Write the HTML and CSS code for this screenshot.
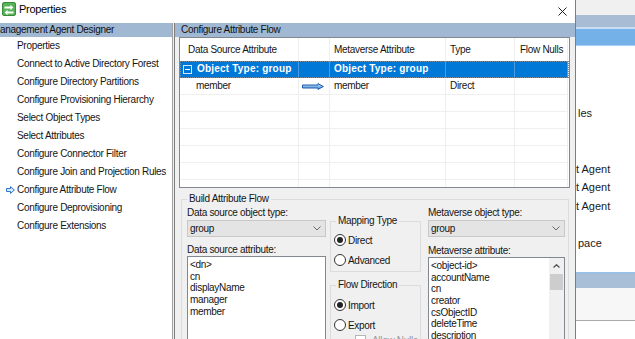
FILE: index.html
```html
<!DOCTYPE html>
<html>
<head>
<meta charset="utf-8">
<title>Properties</title>
<link rel="stylesheet" href="styles.css">
</head>
<body>
<div class="screen">
  <div class="dialog">
    <div class="titlebar">
      <svg class="app-icon" viewBox="0 0 14 14" width="14" height="14"><rect x="0.5" y="0.5" width="13" height="13" rx="1.5" fill="#58b25a" stroke="#3a8a3c"/><path d="M2.5 4.5h6V2.8l2.8 2.7-2.8 2.7V6.5h-6z" fill="#fff"/><path d="M11.5 9.5h-6V7.8L2.7 10.5l2.8 2.7v-1.7h6z" fill="#fff"/></svg>
      <span class="title">Properties</span>
      <svg class="close" viewBox="0 0 9 9" width="9" height="9"><path d="M0.5 0.5 8.5 8.5M8.5 0.5 0.5 8.5" stroke="#222" stroke-width="1" fill="none"/></svg>
    </div>
    <div class="main">
      <div class="left">
        <div class="pane-header left-header">Management Agent Designer</div>
        <ul class="nav">
          <li>Properties</li>
          <li>Connect to Active Directory Forest</li>
          <li>Configure Directory Partitions</li>
          <li>Configure Provisioning Hierarchy</li>
          <li>Select Object Types</li>
          <li>Select Attributes</li>
          <li>Configure Connector Filter</li>
          <li>Configure Join and Projection Rules</li>
          <li class="current"><svg class="cur-arrow" viewBox="0 0 9 8" width="9" height="8"><path d="M0.5 2.5H4.5V0.6L8.4 4 4.5 7.4V5.5H0.5Z" fill="#d6e9fc" stroke="#2f74d0" stroke-width="1"/></svg>Configure Attribute Flow</li>
          <li>Configure Deprovisioning</li>
          <li>Configure Extensions</li>
        </ul>
      </div>
      <div class="splitter"></div>
      <div class="right">
        <div class="pane-header right-header">Configure Attribute Flow</div>
        <div class="grid">
          <div class="gr head">
            <div class="c1">Data Source Attribute</div>
            <div class="c2"></div>
            <div class="c3">Metaverse Attribute</div>
            <div class="c4">Type</div>
            <div class="c5">Flow Nulls</div>
          </div>
          <div class="gr sel">
            <div class="c1 grp"><span class="minus"></span><span class="grp-text">Object Type: group</span></div>
            <div class="c2"></div>
            <div class="c3">Object Type: group</div>
            <div class="c4"></div>
            <div class="c5"></div>
          </div>
          <div class="gr">
            <div class="c1 indent">member</div>
            <div class="c2 arrow-cell"><svg viewBox="0 0 22 7" width="22" height="7"><defs><linearGradient id="ag" x1="0" y1="0" x2="0" y2="1"><stop offset="0" stop-color="#bcdcf7"/><stop offset="1" stop-color="#4b8fd6"/></linearGradient></defs><path d="M0.5 2H16V0.6L21.4 3.5 16 6.4V5H0.5Z" fill="url(#ag)" stroke="#1f5ea8" stroke-width="1"/></svg></div>
            <div class="c3">member</div>
            <div class="c4">Direct</div>
            <div class="c5"></div>
          </div>
          <div class="gr"><div></div><div></div><div></div><div></div><div></div></div>
          <div class="gr"><div></div><div></div><div></div><div></div><div></div></div>
          <div class="gr"><div></div><div></div><div></div><div></div><div></div></div>
          <div class="gr"><div></div><div></div><div></div><div></div><div></div></div>
          <div class="gr"><div></div><div></div><div></div><div></div><div></div></div>
          <div class="gr"><div></div><div></div><div></div><div></div><div></div></div>
        </div>
        <fieldset class="build">
          <legend>Build Attribute Flow</legend>
          <div class="cols">
            <div class="col col-a">
              <div class="lbl first">Data source object type:</div>
              <div class="combo"><span>group</span><svg class="chev" viewBox="0 0 8 5" width="8" height="5"><path d="M0.5 0.5 4 4 7.5 0.5" fill="none" stroke="#6a6a6a"/></svg></div>
              <div class="lbl second">Data source attribute:</div>
              <div class="listbox">
                <div class="items">
                  <div>&lt;dn&gt;</div>
                  <div>cn</div>
                  <div>displayName</div>
                  <div>manager</div>
                  <div>member</div>
                </div>
              </div>
            </div>
            <div class="col col-b">
              <fieldset class="gb gb-map">
                <legend>Mapping Type</legend>
                <div class="opt"><span class="radio on"></span>Direct</div>
                <div class="opt"><span class="radio"></span>Advanced</div>
              </fieldset>
              <fieldset class="gb gb-flow">
                <legend>Flow Direction</legend>
                <div class="opt"><span class="radio on"></span>Import</div>
                <div class="opt"><span class="radio"></span>Export</div>
                <div class="chk-row"><span class="chk"></span><span class="dis">Allow Nulls</span></div>
              </fieldset>
            </div>
            <div class="col col-c">
              <div class="lbl first">Metaverse object type:</div>
              <div class="combo"><span>group</span><svg class="chev" viewBox="0 0 8 5" width="8" height="5"><path d="M0.5 0.5 4 4 7.5 0.5" fill="none" stroke="#6a6a6a"/></svg></div>
              <div class="lbl second">Metaverse attribute:</div>
              <div class="listbox">
                <div class="items">
                  <div>&lt;object-id&gt;</div>
                  <div>accountName</div>
                  <div>cn</div>
                  <div>creator</div>
                  <div>csObjectID</div>
                  <div>deleteTime</div>
                  <div>description</div>
                  <div>displayName</div>
                </div>
                <div class="scrollbar">
                  <div class="sb-up"><svg viewBox="0 0 7 4" width="7" height="4"><path d="M0.5 3.5 3.5 0.7 6.5 3.5" fill="none" stroke="#505050" stroke-width="1.2"/></svg></div>
                  <div class="sb-thumb"></div>
                </div>
              </div>
            </div>
          </div>
        </fieldset>
      </div>
    </div>
  </div>
  <div class="bgwin">
    <div class="bw-top"></div>
    <div class="bw-band"></div>
    <div class="bw-hl"></div>
    <div class="bw-blue"></div>
    <div class="bw-hl2"></div>
    <div class="bw-body">
      <div class="bw-line ind">les</div>
      <div class="bw-line">&nbsp;</div>
      <div class="bw-line">&nbsp;</div>
      <div class="bw-line">t Agent</div>
      <div class="bw-line">t Agent</div>
      <div class="bw-line">t Agent</div>
      <div class="bw-line">&nbsp;</div>
      <div class="bw-line ind">pace</div>
    </div>
    <div class="bw-hl3"></div>
    <div class="bw-band2"></div>
    <div class="bw-pane"></div>
    <div class="bw-sep"></div>
    <div class="bw-rest"></div>
  </div>
</div>
</body>
</html>
```

FILE: styles.css
```css
* { box-sizing: border-box; }
html, body { margin: 0; padding: 0; }
body {
  width: 635px; height: 339px; overflow: hidden;
  font-family: "Liberation Sans", Arial, sans-serif;
  font-size: 10px; letter-spacing: -0.3px; color: #151515;
  background: #fff;
}
.screen { display: flex; width: 635px; height: 339px; overflow: hidden; }

/* dialog */
.dialog {
  width: 576px; flex: none; display: flex; flex-direction: column;
  background: #f0f0f0; border-right: 1px solid #7d7d7d; overflow: hidden;
}
.titlebar {
  height: 23px; flex: none; background: #fff;
  display: flex; align-items: flex-start; padding: 2px 0 0 2px;
}
.app-icon { flex: none; display: block; }
.title { font-size: 11px; line-height: 13px; margin: 1px 0 0 3px; color: #000; }
.close { margin: 5px 8px 0 auto; display: block; }

.main { flex: 1; display: flex; min-height: 0; }
.left {
  width: 173px; flex: none; background: #fff; border-right: 1px solid #a0a0a0;
  display: flex; flex-direction: column; overflow: hidden;
}
.pane-header {
  height: 14px; flex: none; background: #a0b8d2; line-height: 14px;
  white-space: nowrap; overflow: hidden; color: #111;
}
.left-header { text-indent: -8px; }
.nav { list-style: none; margin: 0; padding: 0; }
.nav li {
  height: 18px; line-height: 18px; padding-left: 17px; white-space: nowrap;
  display: flex; align-items: center;
}
.cur-arrow { margin-left: -11px; margin-right: 2px; display: block; flex: none; }
.splitter { width: 1px; flex: none; background: #f0f0f0; }
.right {
  flex: 1; min-width: 0; border-left: 1px solid #7d7d7d;
  display: flex; flex-direction: column; overflow: hidden;
}
.right-header { padding-left: 6px; }

/* list view */
.grid {
  margin-left: 4px; width: 391px; height: 151px; flex: none;
  background: #fff; border: 1px solid #828790; overflow: hidden;
}
.gr {
  display: grid; grid-template-columns: 119px 31px 116px 69px 53px;
  height: 17px;
}
.gr > div {
  border-right: 1px solid #efefef; border-bottom: 1px solid #efefef;
  line-height: 16px; white-space: nowrap; overflow: hidden; padding-left: 4px;
}
.gr .c1 { padding-left: 8px; }
.gr .c5 { padding-left: 5px; }
.gr.head { height: 23px; }
.gr.head > div { border-bottom: none; line-height: 23px; }
.gr.sel { outline: 1px dotted #7a8a99; outline-offset: -1px; }
.gr.sel > div {
  background: #0078d7; color: #fff; font-weight: bold; letter-spacing: 0.2px;
  border-right-color: #4c9be0; border-bottom-color: #0078d7;
}
.gr .grp { padding-left: 3px; display: flex; align-items: center; }
.minus {
  width: 9px; height: 9px; flex: none; border: 1px solid #d4e6f8;
  display: flex; align-items: center; justify-content: center;
}
.minus::before { content: ""; width: 5px; height: 1px; background: #fff; }
.grp-text { margin-left: 5px; }
.gr .indent { padding-left: 16px; }
.gr .arrow-cell { padding-left: 3px; display: flex; align-items: center; }
.arrow-cell svg { display: block; }

/* build attribute flow */
.build {
  margin: 5px 0 0 6px; width: 388px; height: 200px; flex: none; min-width: 0;
  border: 1px solid #dcdcdc; padding: 0 3px 0 5px;
}
.build > legend, .gb > legend { padding: 0 2px; line-height: 12px; }
.cols { display: flex; align-items: flex-start; }
.col-a { width: 139px; flex: none; }
.col-b { width: 91px; flex: none; margin-left: 4px; }
.col-c { width: 137px; flex: none; margin-left: 7px; }
.lbl { line-height: 12px; height: 12px; white-space: nowrap; }
.lbl.first { margin-top: 2px; }
.lbl.second { margin-top: 7px; }
.combo {
  margin-top: 1px; height: 17px; border: 1px solid #c8c8c8; background: #e4e4e4;
  display: flex; align-items: center; padding-left: 2px;
}
.chev { margin-left: auto; margin-right: 4px; display: block; }
.listbox {
  height: 120px; border: 1px solid #828790; background: #fff; display: flex;
}
.items { flex: 1; padding: 2px 0 0 2px; white-space: nowrap; overflow: hidden; }
.items div { line-height: 11.67px; height: 11.67px; }
.col-c .lbl.second { margin-top: 8px; }
.scrollbar { width: 15px; flex: none; background: #f0f0f0; display: flex; flex-direction: column; }
.sb-up { height: 16px; display: flex; align-items: center; justify-content: center; }
.sb-up svg { display: block; }
.sb-thumb { height: 16px; margin: 0 1px; background: #cdcdcd; }

.gb { margin: 0; border: 1px solid #dcdcdc; padding: 3px 0 0 3px; min-width: 0; }
.gb > legend { margin-left: 2px; }
.gb-map { margin-top: 10px; height: 57px; }
.gb-flow { margin-top: 7px; height: 80px; padding-top: 4px; }
.opt { height: 20px; display: flex; align-items: center; white-space: nowrap; }
.radio {
  width: 12px; height: 12px; flex: none; border: 1px solid #333; border-radius: 50%;
  background: #fff; margin-right: 2px;
  display: flex; align-items: center; justify-content: center;
}
.radio.on::before { content: ""; width: 6px; height: 6px; border-radius: 50%; background: #222; }
.chk-row { display: flex; align-items: flex-start; padding-left: 21px; height: 14px; }
.chk { width: 11px; height: 11px; border: 1px solid #b5b5b5; background: #fff; flex: none; }
.dis { color: #9a9a9a; margin-left: 6px; line-height: 11px; }

/* background window */
.bgwin {
  flex: 1; display: flex; flex-direction: column; background: #fff;
  overflow: hidden; font-size: 11px; letter-spacing: 0; color: #1a1a1a;
}
.bw-top { height: 15px; flex: none; background: #f0f0f0; }
.bw-band { height: 12px; flex: none; background: #a8bdd5; }
.bw-hl { height: 2px; flex: none; background: #c6def3; }
.bw-blue { height: 16px; flex: none; background: #74b1e8; }
.bw-hl2 { height: 1px; flex: none; background: #a9d0f3; }
.bw-body { height: 226px; flex: none; padding-top: 57.6px; white-space: nowrap; }
.bw-line { line-height: 18.7px; height: 18.7px; }
.bw-line.ind { padding-left: 2px; }
.bw-hl3 { height: 1px; flex: none; background: #8fc4ef; }
.bw-band2 { height: 15px; flex: none; background: #a9bfd7; }
.bw-pane { height: 32px; flex: none; background: #f7f7f7; }
.bw-sep { height: 1px; flex: none; background: #aaaaaa; }
.bw-rest { flex: 1; background: #fff; }
```
